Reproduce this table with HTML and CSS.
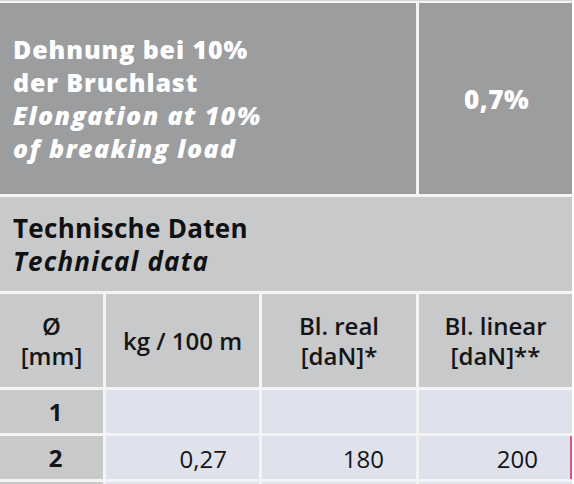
FILE: index.html
```html
<!DOCTYPE html>
<html lang="en">
<head>
    <meta charset="UTF-8">
    <title>Technische Daten</title>
    <link rel="stylesheet" href="styles.css">
</head>
<body>
    <div class="spec-table">
        <div class="cell top-label">
            <span class="de">Dehnung bei 10%<br>der Bruchlast</span>
            <span class="en">Elongation at 10%<br>of breaking load</span>
        </div>
        <div class="cell top-value">0,7%</div>

        <div class="cell section-title">
            <span class="de">Technische Daten</span>
            <span class="en">Technical data</span>
        </div>

        <div class="cell head">Ø<br>[mm]</div>
        <div class="cell head">kg / 100 m</div>
        <div class="cell head">Bl. real<br>[daN]*</div>
        <div class="cell head">Bl. linear<br>[daN]**</div>

        <div class="cell size">1</div>
        <div class="cell data"></div>
        <div class="cell data"></div>
        <div class="cell data"></div>

        <div class="cell size">2</div>
        <div class="cell data">0,27</div>
        <div class="cell data">180</div>
        <div class="cell data last">200</div>

        <div class="cell size"></div>
        <div class="cell data"></div>
        <div class="cell data"></div>
        <div class="cell data"></div>
    </div>
</body>
</html>
```

FILE: styles.css
```css
body {
    margin: 0;
    background-color: #ffffff;
    font-family: "Open Sans", Arial, sans-serif;
}
.spec-table {
    width: 572px;
    display: grid;
    grid-template-columns: 103px 153px 154px 153px;
    grid-template-rows: 191px 94px 93px 43px 43px 43px;
    gap: 3px;
    padding-top: 2px;
    background-color: #f4f4f5;
    border-top: 1px solid #d6d6d8;
}
.cell {
    display: flex;
    align-items: center;
    justify-content: center;
}
.top-label {
    grid-column: 1 / 4;
    background-color: #9c9d9f;
    color: #ffffff;
    flex-direction: column;
    align-items: flex-start;
    padding-left: 13px;
    font-size: 25px;
    font-weight: 800;
    line-height: 33px;
    letter-spacing: 0.9px;
    padding-top: 1px;
}
.top-label .en {
    font-style: italic;
    letter-spacing: 1.4px;
}
.top-value {
    background-color: #9c9d9f;
    color: #ffffff;
    font-size: 26px;
    font-weight: 800;
    letter-spacing: 0.5px;
    padding-left: 2px;
}
.section-title {
    grid-column: 1 / 5;
    background-color: #c8c9cb;
    color: #111111;
    flex-direction: column;
    align-items: flex-start;
    padding-left: 13px;
    font-size: 26px;
    font-weight: bold;
    line-height: 33px;
    letter-spacing: 0.3px;
    padding-top: 1px;
}
.section-title .en {
    font-style: italic;
    letter-spacing: 1.2px;
}
.head {
    background-color: #c8c9cb;
    color: #151515;
    text-align: center;
    font-size: 24px;
    font-weight: 600;
    line-height: 30px;
}
.size {
    background-color: #c8c9cb;
    color: #151515;
    font-size: 24px;
    font-weight: bold;
    padding-left: 8px;
}
.data {
    background-color: #dfe1ec;
    color: #151515;
    font-size: 24px;
    justify-content: flex-end;
    padding-right: 32px;
    padding-top: 2px;
}
.data.last {
    border-right: 2px solid #d4568a;
}
```
